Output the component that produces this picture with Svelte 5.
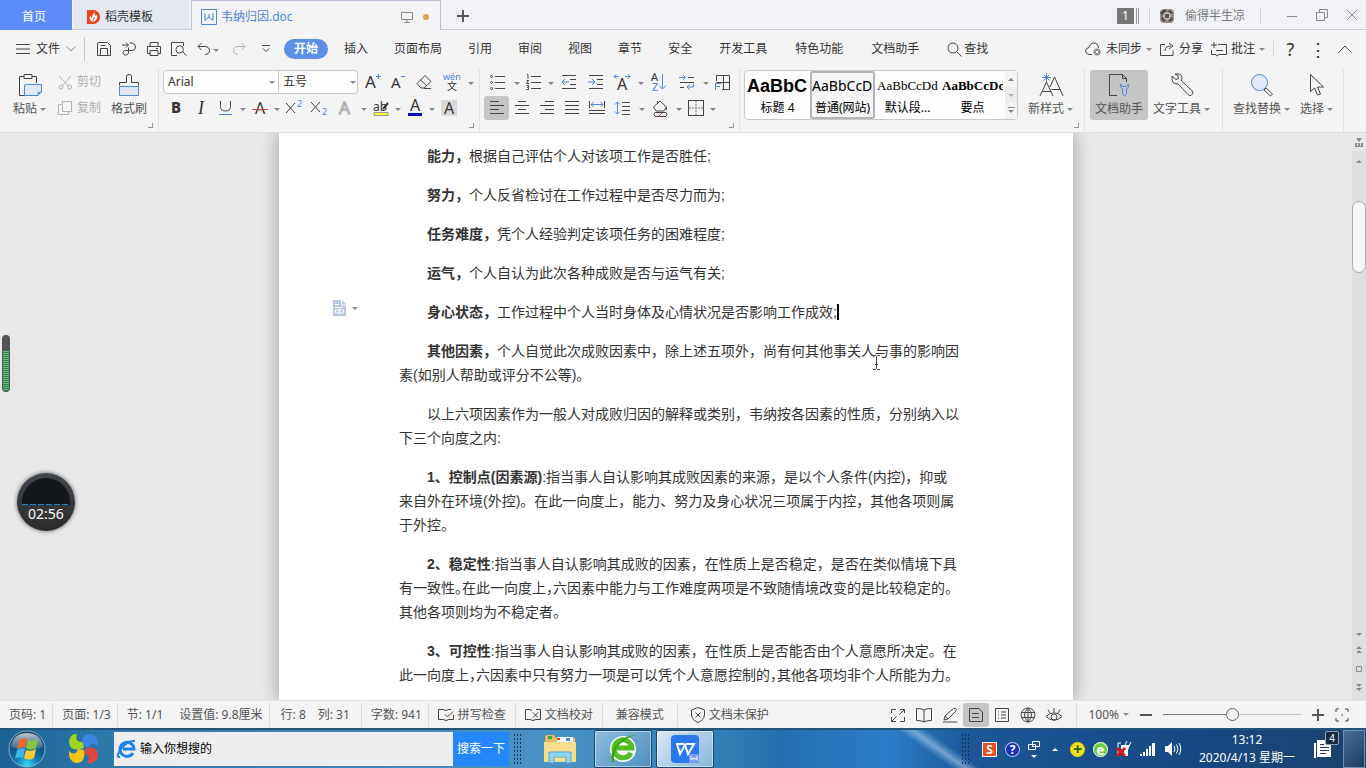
<script>
    // [width, height, ...parts]; a part is [class, path] or [class, text, x, y, size]
    const icons = {
        flame: [14, 14, ['orange', 'M1 0H7C11 0 14 3 14 7S11 14 7 14H1Z'], ['white', 'M7 12C4 11 3 9 4 6L6 8C6 5 7 4 9 2C8 5 9 6 11 5C12 8 10 11 7 12Z'], ['line-orange', 'M7 11C7 9 8 8 9 7']],
        doc: [16, 16, ['blue', 'M.5 .5H15.5V15.5H.5ZM4 4V11.5L8 8L12 11.5V4M8 8V5']],
        monitor: [12, 12, ['grey', 'M.5 1.5H11.5V8.5H.5ZM6 8.5V11.5M3 11.5H9']],
        plus: [12, 12, ['thick', 'M6 0V12M0 6H12']],
        minimize: [12, 12, ['grey', 'M1 7.5H11']],
        restore: [12, 12, ['grey', 'M.5 3.5H8.5V11.5H.5ZM3.5 3.5V.5H11.5V8.5H8.5']],
        close: [12, 12, ['grey', 'M1 1L11 11M11 1L1 11']],
        lines: [14, 14, ['dark', 'M0 2.5H14M0 7H14M0 11.5H14']],
        chevron: [10, 8, ['grey', 'M.5 1.5L5 6L9.5 1.5']],
        save: [14, 14, ['dark', 'M.5 2Q.5 .5 2 .5H10.5L13.5 3.5V13.5H.5ZM3.5 13.5V6.5H10.5V13.5M3.5 3.5H8.5']],
        output: [14, 14, ['dark', 'M0 3H6M4 .5L6.5 3L4 5.5M7.5 1H10Q13.5 1.5 13.5 5T10 8.5H3.5Q1 8.5 1 10.7T3.5 13T6.5 11V5.5']],
        print: [14, 14, ['dark', 'M3 4.5V.5H11V4.5M3 11.5H.5V4.5H13.5V11.5H11M3 8.5H11V13.5H3ZM9 6.5H11']],
        preview: [16, 14, ['dark', 'M6 13.5H.5V.5H12.5V4M12 10L15.5 13.5'], ['dark', 'M5 7.5A3.7 3.7 0 1 0 12.4 7.5A3.7 3.7 0 1 0 5 7.5']],
        undo: [14, 14, ['dark', 'M1 4.5H8Q12.5 5 12.5 8.5T8 12.5M4.5 1L1 4.5L4.5 8']],
        redo: [14, 14, ['light', 'M13 4.5H6Q1.5 5 1.5 8.5T6 12.5M9.5 1L13 4.5L9.5 8']],
        more: [8, 8, ['dark', 'M0 .5H8M1 3.5L4 6.5L7 3.5']],
        search: [15, 15, ['dark', 'M1 6A5 5 0 1 0 11 6A5 5 0 1 0 1 6M9.5 9.5L14.5 14.5']],
        cloud: [17, 15, ['dark', 'M7 12.5H4Q.5 12 .5 9T4 5.5Q5 1 9 1T13.5 6'], ['fill-grey', 'M12 6.5A3.5 3.5 0 1 0 12 13.5A3.5 3.5 0 1 0 12 6.5'], ['line-white', 'M10.5 8.5L13.5 11.5M13.5 8.5L10.5 11.5']],
        share: [15, 15, ['dark', 'M5 2.5H.5V13.5H13V8.5M5 9Q5 4 11 4M9 1L13 4L9 7']],
        comment: [16, 15, ['dark', 'M7 2.5H15.5V12.5H8L5.5 14L5 12.5H.5V8M3 0V6M0 3H6M5 8.5H12']],
        up: [14, 10, ['dark', 'M.5 8.5L7 2L13.5 8.5']],
        paste: [24, 24, ['dark', 'M8 22.5H1.5V3.5H6M14 3.5H18.5V10M6 1.5H14V5.5H6Z'], ['tint', 'M8.5 11.5H23.5V19L20 22.5H6.5V12Z'], ['fill-blue', 'M23.5 18.5L19.5 22.5V19.5Z']],
        cut: [15, 15, ['light', 'M1 1L10.5 11M13 1L4 11M1 12A2 2 0 1 0 5 12A2 2 0 1 0 1 12M9.5 12A2 2 0 1 0 13.5 12A2 2 0 1 0 9.5 12']],
        copy: [15, 15, ['light', 'M4.5 .5H13.5V10.5H4.5ZM4.5 3.5H.5V13.5H10.5V10.5']],
        brush: [24, 24, ['tint', 'M2.5 13.5H21.5V22.5H2.5Z'], ['dark', 'M2.5 12.5V9.5H9.5V3Q9.5 1.5 12 1.5T14.5 3V9.5H21.5V12.5']],
        grow: [18, 18, ['text-dark', 'A', 1, 15, 17], ['blue', 'M12 3.5H17M14.5 1V6']],
        shrink: [16, 18, ['text-dark', 'A', 1, 15, 15], ['blue', 'M11 3.5H15']],
        eraser: [16, 16, ['dark', 'M1 9.5L9 1.5L15 7.5L8 14H5ZM4.5 6L11 12M8 14.5H15']],
        phonetic: [18, 20, ['text-blue', 'wén', 0, 8, 9], ['text-dark', '文', 4, 18, 10]],
        bold: [12, 14, ['text-bold', 'B', 1, 12, 15]],
        italic: [12, 16, ['text-italic', 'I', 3, 14, 18]],
        underline: [14, 16, ['dark', 'M1.5 1V6.5Q1.5 11 6.5 11T11.5 6.5V1'], ['blue', 'M0 14.5H13']],
        strike: [16, 16, ['text-dark', 'A', 3, 14, 16], ['line-red', 'M0 9.5H16']],
        sup: [18, 16, ['dark', 'M1 3L10 13M10 3L1 13'], ['text-blue', '2', 12, 7, 9]],
        sub: [18, 16, ['dark', 'M1 2L10 12M10 2L1 12'], ['text-blue', '2', 12, 15, 9]],
        outline: [14, 16, ['text-outline', 'A', 1, 14, 17]],
        highlight: [18, 18, ['text-dark', 'ab', 1, 12, 12], ['line-dark', 'M11 10L16 4'], ['yellow', 'M2 13.5H16V16.5H2Z']],
        color: [14, 18, ['text-dark', 'A', 2, 12, 16], ['navy', 'M0 14H14V17H0Z']],
        shade: [16, 18, ['fill-shade', 'M0 1H16V17H0Z'], ['text-dark', 'A', 3, 15, 16]],
        bullets: [16, 16, ['dark', 'M5 2.5H15M5 8.5H15M5 14.5H15M.5 2.5A1 1 0 1 0 2.5 2.5A1 1 0 1 0 .5 2.5M.5 8.5A1 1 0 1 0 2.5 8.5A1 1 0 1 0 .5 8.5M.5 14.5A1 1 0 1 0 2.5 14.5A1 1 0 1 0 .5 14.5']],
        numbers: [16, 16, ['dark', 'M5 2.5H15M5 8.5H15M5 14.5H15M1 .5H2V4.5M.5 6.5H2.5L.5 9.5H3M.5 11.5H2.5V15.5H.5M1 13.5H2.5']],
        outdent: [16, 16, ['dark', 'M1 1.5H15M9 5.5H15M9 10.5H15M1 14.5H15'], ['blue', 'M1 8H8M4 5L1 8L4 11']],
        indent: [16, 16, ['dark', 'M1 1.5H15M9 5.5H15M9 10.5H15M1 14.5H15'], ['blue', 'M0 8H7M4 5L7 8L4 11']],
        scale: [18, 18, ['text-dark', 'A', 4, 17, 16], ['blue', 'M1 3.5H6M3.5 1L1 3.5L3.5 6M12 3.5H17M14.5 1L17 3.5L14.5 6']],
        sort: [18, 20, ['text-dark', 'A', 1, 9, 11], ['text-blue', 'Z', 2, 19, 11], ['blue', 'M12.5 2V17M9 13.5L12.5 17L16 13.5']],
        tabs: [16, 16, ['dark', 'M9 3.5H15M1 8.5H15M1 13.5H5'], ['blue', 'M0 3.5H6M4 1L6.5 3.5L4 6M14.5 10V13H8M10.5 10.5L8 13L10.5 15.5']],
        tableframe: [17, 17, ['dark', 'M2.5 7V1.5H15.5V15.5H8M9.5 1.5V15.5M2.5 8.5H15.5'], ['blue', 'M1.5 16V9.5H7M1.5 12.5H6']],
        left: [14, 14, ['dark', 'M0 .5H9M0 4.5H14M0 8.5H9M0 12.5H14']],
        center: [14, 14, ['dark', 'M3 .5H11M0 4.5H14M3 8.5H11M0 12.5H14']],
        right: [14, 14, ['dark', 'M5 .5H14M0 4.5H14M5 8.5H14M0 12.5H14']],
        justify: [14, 14, ['dark', 'M0 .5H14M0 4.5H14M0 8.5H14M0 12.5H14']],
        distribute: [16, 14, ['dark', 'M.5 0V7M15.5 0V7M0 9.5H16M0 12.5H16'], ['blue', 'M2 3.5H14M4.5 1L2 3.5L4.5 6M11.5 1L14 3.5L11.5 6']],
        spacing: [16, 16, ['dark', 'M7 2.5H15M7 6.5H15M7 10.5H15M7 14.5H15'], ['blue', 'M2.5 2V14M0 4.5L2.5 2L5 4.5M0 11.5L2.5 14L5 11.5']],
        fill: [17, 17, ['dark', 'M1.5 7L8 1L14.5 7L12 11H4ZM5.5 4V1M14.5 7V10'], ['line-red', 'M7 16L10 13'], ['dark', 'M3 12.5H14Q16 14.5 14 16.5H3Q1 14.5 3 12.5']],
        border: [16, 16, ['dark', 'M.5 .5H15.5V15.5H.5Z'], ['dash', 'M8 1V15M1 8H15']],
        newstyle: [28, 24, ['dark', 'M3 23L9.5 9L16 23M5 18.5H14M13 14L17.5 4L26 23M14.5 16.5H23'], ['blue', 'M9.5 0V9M5 4.5H14M6.5 1.5L12.5 7.5M12.5 1.5L6.5 7.5']],
        helper: [24, 24, ['dark', 'M10 22.5H2.5V1.5H15.5L19.5 5.5V9M15.5 1.5V5.5H19.5'], ['blue', 'M13.5 11Q12 14 15.5 16V21Q17.5 24 19.5 21V16Q23 14 21.5 11L19.5 13.5H15.5Z']],
        wrench: [24, 24, ['dark', 'M2 3L6 6.5L8.5 5.5L8 2.5L5 1Q11 0 12 4L11.5 8L22.5 18Q24 21 21 22.5Q19 23 18 21.5L8 11Q1 11.5 2 3Z']],
        find: [24, 24, ['tint', 'M1.5 9.5A8 8 0 1 0 17.5 9.5A8 8 0 1 0 1.5 9.5'], ['dark', 'M14 17L16 15L22.5 21L20.5 23Z']],
        pointer: [18, 24, ['dark', 'M2.5 1.5V18.5L6.5 15L9.5 22L12.5 21L9.5 14H15.5Z']],
        tip: [13, 16, ['pale', 'M0 0H9L13 4V16H0Z'], ['line-white', 'M8.5 0V5H13M2 4.5H6M2 7.5H10M2.5 10H10.5V13H2.5ZM6.5 9V14']],
        spell: [16, 14, ['dark', 'M8 2.5Q6 1 .5 1.5V11.5Q6 11 8 12.5Q10 11 15.5 11.5V7M8 2.5Q10 1 13 1.5M7 6.5L9.5 9L15 3.5']],
        proof: [16, 14, ['dark', 'M7 2.5Q5 1 .5 1.5V11.5Q6 11 8 12.5Q10 11 15.5 11.5V1.5H11M8 4.5L13 9.5M13 4.5L8 9.5']],
        shield: [14, 16, ['dark', 'M7 .5L13.5 3V8Q13 13 7 15.5Q1 13 .5 8V3ZM4.5 5.5L9.5 10.5M9.5 5.5L4.5 10.5']],
        full: [16, 16, ['dark', 'M1.5 6V2.5H6M10 2.5H14.5V6M14.5 10V14.5H10M6 14.5H1.5V10M9.5 7.5L14 3M2 14L6.5 9.5']],
        book: [16, 16, ['dark', 'M8 3Q6 1.5 .5 1.5V13.5Q6 13.5 8 15Q10 13.5 15.5 13.5V1.5Q10 1.5 8 3V15']],
        pen: [16, 16, ['dark', 'M2 13L3 9L11.5 1.5Q15 .5 14 4L6 12ZM3 9L6 12M1 15H15.5']],
        page: [16, 16, ['dark', 'M1.5 1.5H11L14.5 5V14.5H1.5ZM4 6.5H11M4 10.5H11']],
        outlineview: [16, 16, ['dark', 'M1.5 1.5H14.5V14.5H1.5ZM4 5H5M7 5H12M4 8H5M7 8H12M4 11H5M7 11H12']],
        globe: [16, 16, ['dark', 'M1 8A7 7 0 1 0 15 8A7 7 0 1 0 1 8M8 1V15M1.5 5.5H14.5M1.5 10.5H14.5M8 1Q1 8 8 15Q15 8 8 1']],
        eye: [18, 16, ['dark', 'M1 9.5Q9 2 17 9.5Q9 17 1 9.5M6 10A3 3 0 1 0 12 10A3 3 0 1 0 6 10M9 5V1M5 6L3 2.5M13 6L15 2.5']],
        minus: [12, 12, ['thick', 'M0 6H12']],
        fit: [14, 14, ['dark', 'M1 4V1H4M10 1H13V4M13 10V13H10M4 13H1V10M6.5 7H7.5M7 6.5V7.5']],
        desk: [12, 10, ['line-white', 'M4.5 .5H11.5V5.5H4.5ZM.5 3.5H7.5V8.5H.5Z']],
        bars: [16, 16, ['white', 'M0 13H2V15H0ZM3 11H5V15H3ZM6 8H8V15H6ZM9 5H11V15H9ZM12 2H15V15H12Z']],
        speaker: [18, 16, ['white', 'M1 5H4L8 1V15L4 11H1Z'], ['line-white', 'M10 5Q12 8 10 11M12.5 3.5Q15.5 8 12.5 12.5M15 2Q18.5 8 15 14']],
        plug: [16, 16, ['white', 'M5 4H14L12 9V15H8V9L5 8Z'], ['line-white', 'M13 5L15 1M9 4L11 0M2 13V2H5'], ['line-close', 'M1 7L9 15M9 7L1 15']],
        note: [22, 20, ['white', 'M4 1H18V18H4ZM1 4H3V19H1Z'], ['line-navy', 'M7 5.5H11M7 8.5H16M7 11.5H16M7 14.5H13']],
        ruler: [10, 10, ['fill-grey', 'M2 0H8L5 4ZM1 5H3V8H4V5H6V8H7V5H9V9H1Z']],
        prev: [8, 8, ['fill-grey', 'M4 0L7 3H1ZM4 4L7 7H1Z']],
        next: [8, 8, ['fill-grey', 'M1 0H7L4 3ZM1 4H7L4 7Z']],
        target: [8, 8, ['grey', 'M1.5 1.5H6.5V6.5H1.5Z']]
    };

    const quick = [['save', '保存'], ['output', '输出为PDF'], ['print', '打印'], ['preview', '打印预览']];
    const tabs = ['开始', '插入', '页面布局', '引用', '审阅', '视图', '章节', '安全'];
    const extraTabs = ['开发工具', '特色功能', '文档助手'];

    // name, label, caret, wide
    const fontTop = [['grow', '增大字号'], ['shrink', '减小字号'], ['eraser', '清除格式', 0, 1], ['phonetic', '拼音指南', 1, 1]];
    const fontBottom = [
        ['bold', '加粗'], ['italic', '倾斜'], ['underline', '下划线', 1], ['strike', '删除线', 1], ['sup', '上标'],
        ['sub', '下标'], ['outline', '文字效果', 1, 1], ['highlight', '突出显示', 1], ['color', '字体颜色', 1], ['shade', '字符底纹']
    ];
    const paraTop = [
        ['bullets', '项目符号', 1, 1], ['numbers', '编号', 1], ['outdent', '减少缩进', 0, 1], ['indent', '增加缩进'],
        ['scale', '中文版式', 1, 1], ['sort', '排序', 0, 1], ['tabs', '制表位', 1, 1], ['tableframe', '插入框']
    ];
    const paraBottom = [
        ['left', '左对齐'], ['center', '居中'], ['right', '右对齐'], ['justify', '两端对齐'], ['distribute', '分散对齐'],
        ['spacing', '行距', 1, 1], ['fill', '底纹颜色', 1, 1], ['border', '边框', 1]
    ];
    const styles = [
        { name: '标题 4', sample: 'AaBbC', kind: 'heading' },
        { name: '普通(网站)', sample: 'AaBbCcD', kind: 'web' },
        { name: '默认段...', sample: 'AaBbCcDd', kind: 'serif' },
        { name: '要点', sample: 'AaBbCcDd', kind: 'strong' }
    ];

    // tight: index of the line whose punctuation is set half-width
    const paragraphs = [
        { term: '能力，', lines: ['根据自己评估个人对该项工作是否胜任;'] },
        { term: '努力，', lines: ['个人反省检讨在工作过程中是否尽力而为;'] },
        { term: '任务难度，', lines: ['凭个人经验判定该项任务的困难程度;'] },
        { term: '运气，', lines: ['个人自认为此次各种成败是否与运气有关;'] },
        { term: '身心状态，', lines: ['工作过程中个人当时身体及心情状况是否影响工作成效;'], active: true },
        { term: '其他因素，', lines: ['个人自觉此次成败因素中，除上述五项外，尚有何其他事关人与事的影响因', '素(如别人帮助或评分不公等)。'] },
        { term: '', lines: ['以上六项因素作为一般人对成败归因的解释或类别，韦纳按各因素的性质，分别纳入以', '下三个向度之内:'] },
        { term: '1、控制点(因素源)', lines: [':指当事人自认影响其成败因素的来源，是以个人条件(内控)，抑或', '来自外在环境(外控)。在此一向度上，能力、努力及身心状况三项属于内控，其他各项则属', '于外控。'] },
        { term: '2、稳定性', lines: [':指当事人自认影响其成败的因素，在性质上是否稳定，是否在类似情境下具', '有一致性。在此一向度上，六因素中能力与工作难度两项是不致随情境改变的是比较稳定的。', '其他各项则均为不稳定者。'], tight: 1 },
        { term: '3、可控性', lines: [':指当事人自认影响其成败的因素，在性质上是否能否由个人意愿所决定。在', '此一向度上，六因素中只有努力一项是可以凭个人意愿控制的，其他各项均非个人所能为力。'], tight: 1 }
    ];

    const views = [['full', '全屏显示'], ['book', '阅读版式'], ['pen', '写作模式'], ['page', '页面视图'], ['outlineview', '大纲'], ['globe', 'Web版式'], ['eye', '护眼模式']];

    let font = $state('Arial');
    let size = $state('五号');
    let zoom = $state(50);
    let tab = $state('开始');
    let align = $state('left');
    let view = $state('page');
    let query = $state('');
</script>

{#snippet icon(name)}
    {@const [w, h, ...parts] = icons[name]}
    <svg width={w} height={h} viewBox="0 0 {w} {h}" fill="none" aria-hidden="true">
        {#each parts as p}
            {#if p.length > 2}
                <text class={p[0]} x={p[2]} y={p[3]} font-size={p[4]}>{p[1]}</text>
            {:else}
                <path class={p[0]} d={p[1]} />
            {/if}
        {/each}
    </svg>
{/snippet}

{#snippet tools(list)}
    {#each list as [name, label, caret, wide]}
        <button class="tool" class:wide class:on={name === align} aria-label={label}
            onclick={() => { if (['left', 'center', 'right', 'justify'].includes(name)) align = name; }}>
            <span class="slot">{@render icon(name)}</span>
            {#if caret}<span class="caret"></span>{/if}
        </button>
    {/each}
{/snippet}

{#snippet big(name, label, caret, on)}
    <button class="big" class:pressed={on}>
        {@render icon(name)}
        <span class="big-label">{label}{#if caret}<i class="caret"></i>{/if}</span>
    </button>
{/snippet}

<div class="app">
    <header class="titlebar">
        <button class="home">首页</button>
        <button class="doctab">{@render icon('flame')}<span>稻壳模板</span></button>
        <button class="doctab current">
            {@render icon('doc')}<span class="filename">韦纳归因.doc</span>
            {@render icon('monitor')}<span class="unsaved"></span>
        </button>
        <button class="newtab" aria-label="新建">{@render icon('plus')}</button>
        <div class="account">
            <span class="count">1</span><span class="stack"></span>
            <span class="avatar">
                <svg width="16" height="16" viewBox="0 0 16 16" aria-hidden="true">
                    <rect x="1" y="1" width="14" height="14" rx="4" fill="#a08c86" />
                    <path d="M3 3L6 1L8 4L11 2L14 5L11 7L14 11L11 14L8 11L5 14L2 11L4 8L1 5Z" fill="#4a4a4c" />
                    <circle cx="8" cy="8" r="4" fill="#bdb9b6" />
                    <path d="M6 6H10V10H6Z" fill="#5d5654" />
                </svg>
            </span>
            <span class="user">偷得半生凉</span>
        </div>
        <div class="window">
            <button aria-label="最小化">{@render icon('minimize')}</button>
            <button aria-label="还原">{@render icon('restore')}</button>
            <button aria-label="关闭">{@render icon('close')}</button>
        </div>
    </header>

    <nav class="menubar">
        <button class="file">{@render icon('lines')}<span>文件</span>{@render icon('chevron')}</button>
        <div class="quick">
            {#each quick as [name, label]}
                <button class="tool" aria-label={label}>{@render icon(name)}</button>
            {/each}
            <button class="tool split" aria-label="撤销">{@render icon('undo')}<span class="caret"></span></button>
            <button class="tool wide" aria-label="恢复">{@render icon('redo')}</button>
            <button class="tool" aria-label="更多">{@render icon('more')}</button>
        </div>
        <div class="tabs">
            {#each tabs as t}
                <button class:active={t === tab} onclick={() => (tab = t)}>{t}</button>
            {/each}
        </div>
        <div class="tabs extra">
            {#each extraTabs as t}
                <button class:active={t === tab} onclick={() => (tab = t)}>{t}</button>
            {/each}
            <button class="lookup">{@render icon('search')}查找</button>
        </div>
        <div class="share">
            <button>{@render icon('cloud')}未同步<span class="caret"></span></button>
            <button>{@render icon('share')}分享</button>
            <button>{@render icon('comment')}批注<span class="caret"></span></button>
        </div>
        <div class="help">
            <button class="question">?</button>
            <button class="dots">⋮</button>
            <button aria-label="折叠功能区">{@render icon('up')}</button>
        </div>
    </nav>

    <section class="ribbon">
        <div class="group clipboard">
            {@render big('paste', '粘贴', true)}
            <div class="column">
                <button class="small">{@render icon('cut')}剪切</button>
                <button class="small">{@render icon('copy')}复制</button>
            </div>
            {@render big('brush', '格式刷')}
            <span class="corner"></span>
        </div>
        <div class="group font">
            <div class="column">
                <div class="row">
                    <div class="combos">
                        <label class="combo name">
                            <select bind:value={font} aria-label="字体"><option>Arial</option></select>
                            <span class="caret"></span>
                        </label>
                        <label class="combo">
                            <select bind:value={size} aria-label="字号"><option>五号</option></select>
                            <span class="caret"></span>
                        </label>
                    </div>
                    {@render tools(fontTop)}
                </div>
                <div class="row">{@render tools(fontBottom)}</div>
            </div>
            <span class="corner"></span>
        </div>
        <div class="group para">
            <div class="column">
                <div class="row">{@render tools(paraTop)}</div>
                <div class="row">{@render tools(paraBottom)}</div>
            </div>
            <span class="corner"></span>
        </div>
        <div class="group gallery-group">
            <div class="gallery">
                {#each styles as s, i}
                    <button class="style" class:selected={i === 1}>
                        <span class="sample {s.kind}">{s.sample}</span>
                        <span class="style-name">{s.name}</span>
                    </button>
                {/each}
                <div class="scroller">
                    <button aria-label="上一行"><span class="caret flip"></span></button>
                    <button aria-label="下一行" disabled><span class="caret"></span></button>
                    <button aria-label="更多样式"><span class="caret bar"></span></button>
                </div>
            </div>
            {@render big('newstyle', '新样式', true)}
            <span class="corner"></span>
        </div>
        <div class="group helpers">
            {@render big('helper', '文档助手', false, true)}
            {@render big('wrench', '文字工具', true)}
        </div>
        <div class="group edit">
            {@render big('find', '查找替换', true)}
            {@render big('pointer', '选择', true)}
        </div>
    </section>

    <main class="workspace">
        <div class="desk">
            <article class="page">
                {#each paragraphs as p}
                    <p>
                        {#if p.active}<span class="tip">{@render icon('tip')}<i class="caret"></i></span>{/if}
                        {#each p.lines as line, i}
                            <span class="line" class:tight={i === p.tight}>{#if i === 0 && p.term}<b>{p.term}</b>{/if}{line}{#if p.active}<i class="cursor"></i>{/if}</span>
                        {/each}
                    </p>
                {/each}
            </article>
        </div>
        <div class="scrollbar">
            <span class="ruler">{@render icon('ruler')}</span>
            <div class="track">
                <span class="caret flip"></span>
                <span class="thumb"></span>
                <span class="caret bottom"></span>
            </div>
            <div class="jumps">
                {@render icon('prev')}
                {@render icon('target')}
                {@render icon('next')}
            </div>
        </div>
        <div class="meter"><span></span></div>
        <div class="recorder">
            <div class="dial"></div>
            <span class="time">02:56</span>
        </div>
        <svg class="ibeam" width="9" height="15" viewBox="0 0 9 15" fill="none" aria-hidden="true">
            <path class="dark" d="M1 .5H3.5L4.5 1.5L5.5 .5H8M4.5 1.5V13.5M1 14.5H3.5L4.5 13.5L5.5 14.5H8M3 9.5H6" />
        </svg>
    </main>

    <footer class="status">
        <span class="cell">页码: 1</span>
        <span class="cell">页面: 1/3</span>
        <span class="cell pair"><span>节: 1/1</span><span>设置值: 9.8厘米</span></span>
        <span class="cell pair tight-pair"><span>行: 8</span><span>列: 31</span></span>
        <span class="cell">字数: 941</span>
        <button class="cell">{@render icon('spell')}拼写检查</button>
        <button class="cell">{@render icon('proof')}文档校对</button>
        <button class="cell mode">兼容模式</button>
        <button class="cell mode last">{@render icon('shield')}文档未保护</button>
        <div class="views">
            {#each views as [name, label]}
                <button class:on={name === view} aria-label={label} onclick={() => (view = name)}>{@render icon(name)}</button>
            {/each}
        </div>
        <div class="zoom">
            <button class="percent">100%<span class="caret"></span></button>
            <button aria-label="缩小">{@render icon('minus')}</button>
            <input type="range" min="0" max="100" bind:value={zoom} aria-label="显示比例" />
            <button aria-label="放大">{@render icon('plus')}</button>
            <button aria-label="最佳显示比例">{@render icon('fit')}</button>
        </div>
    </footer>

    <div class="taskbar">
        <button class="start" aria-label="开始菜单">
            <svg width="38" height="38" viewBox="0 0 38 38" aria-hidden="true">
                <defs>
                    <radialGradient id="orb" cx="50%" cy="95%" r="85%">
                        <stop offset="0" stop-color="#35d8ff" />
                        <stop offset=".4" stop-color="#1273ab" />
                        <stop offset="1" stop-color="#173a5c" />
                    </radialGradient>
                    <linearGradient id="shine" x1="0" y1="0" x2="0" y2="1">
                        <stop offset="0" stop-color="#fff" stop-opacity=".7" />
                        <stop offset="1" stop-color="#fff" stop-opacity=".1" />
                    </linearGradient>
                </defs>
                <circle cx="19" cy="19" r="18" fill="url(#orb)" stroke="#7fb4d0" />
                <path d="M3 17Q5 3 19 3T35 17Q19 22 3 17Z" fill="url(#shine)" />
                <path d="M11 10Q15 7 19 9L17 18Q13 16 9 19Z" fill="#f0672c" />
                <path d="M20 10Q25 12 30 9L28 18Q23 21 18 18Z" fill="#8cc63e" />
                <path d="M9 20Q13 17 17 19L15 28Q11 26 7 29Z" fill="#40b2e8" />
                <path d="M18 20Q23 22 28 19L26 28Q21 31 16 28Z" fill="#fccb2f" />
            </svg>
        </button>
        <button class="balls" aria-label="浏览器">
            <svg width="32" height="32" viewBox="0 0 32 32" aria-hidden="true">
                <path d="M16 15Q2 20 1 9Q2 0 9 1Q6 9 15 9Z" fill="#9fd61c" />
                <path d="M15 12Q12 1 23 1Q31 3 30 13Q24 7 20 15Z" fill="#3a86e0" />
                <path d="M16 17Q18 30 8 30Q0 28 1 18Q7 24 10 16Z" fill="#f8c417" />
                <path d="M17 16Q29 11 30 23Q28 31 19 30Q24 23 17 21Z" fill="#e0473c" />
            </svg>
        </button>
        <form class="search" onsubmit={(e) => e.preventDefault()}>
            <svg width="20" height="20" viewBox="0 0 20 20" fill="none" aria-hidden="true">
                <path d="M16 14A7 7 0 1 1 17 10H6" stroke="#1c84e8" stroke-width="3" />
                <path d="M3 18Q-2 19 4 10Q11 1 18 2" stroke="#1c84e8" stroke-width="2" />
            </svg>
            <input type="text" placeholder="输入你想搜的" aria-label="搜索" bind:value={query} />
            <button>搜索一下</button>
        </form>
        <span class="grip"></span>
        <button class="task plain" aria-label="资源管理器">
            <svg width="34" height="30" viewBox="0 0 34 30" aria-hidden="true">
                <path d="M2 3Q2 1 4 1H11L13 4H32V27H2Z" fill="#e2bd61" />
                <path d="M5 2H9V5H5Z" fill="#3fa648" />
                <path d="M14 3H30V8H14Z" fill="#f5f7f8" />
                <path d="M23 4H27V7H23Z" fill="#4a8fc8" />
                <path d="M14 4H17V6H14Z" fill="#cc4338" />
                <path d="M1 8H33V28H1Z" fill="#f7de8f" />
                <path d="M6 29V18H28V29H23V23H11V29Z" fill="#8fd3ee" stroke="#5ba7cd" />
            </svg>
        </button>
        <button class="task" aria-label="360浏览器">
            <svg width="30" height="32" viewBox="0 0 30 32" fill="none" aria-hidden="true">
                <circle cx="15" cy="16" r="13" fill="#fff" />
                <path d="M23 20A9 9 0 1 1 24 15H8" stroke="#55bd22" stroke-width="5" />
                <path d="M4 29Q1 20 10 10Q18 2 28 2Q20 4 12 11Q5 18 6 29Z" fill="#3da31a" />
            </svg>
        </button>
        <button class="task current" aria-label="WPS文字">
            <svg width="28" height="28" viewBox="0 0 28 28" fill="none" aria-hidden="true">
                <rect width="28" height="28" rx="4" fill="#2a78ee" />
                <path d="M5 9H13M6 9L9 19L14 10L17 19L23 9H15" stroke="#fff" stroke-width="2" />
                <rect x="18" y="19" width="10" height="9" rx="1" fill="#7b9cf4" />
                <path d="M20 21V25L23 23L26 25V21" stroke="#fff" />
            </svg>
        </button>
        <div class="tray">
            <span class="grip"></span>
            <span class="sogou">S</span>
            <span class="ask">?</span>
            <span class="lang">{@render icon('desk')}<i class="caret"></i></span>
            <i class="caret flip"></i>
            <span class="guard">+</span>
            <span class="leaf">e</span>
            {@render icon('plug')}
            {@render icon('bars')}
            {@render icon('speaker')}
        </div>
        <div class="clock"><span>13:12</span><span>2020/4/13 星期一</span></div>
        <div class="notes">{@render icon('note')}<span class="badge">4</span></div>
        <button class="showdesk" aria-label="显示桌面"></button>
    </div>
</div>

<style>
    :global(body) {
        margin: 0;
    }

    .app {
        height: 100vh;
        display: flex;
        flex-direction: column;
        overflow: hidden;
        background: #f4f4f4;
        color: #333;
        font: 12px/16px "Noto Sans", "Noto Sans CJK SC", sans-serif;
    }

    button {
        display: flex;
        align-items: center;
        justify-content: center;
        padding: 0;
        border: 0;
        background: none;
        color: inherit;
        font: inherit;
        white-space: nowrap;
    }

    svg {
        flex: none;
        display: block;
        overflow: visible;
    }

    .caret {
        flex: none;
        width: 0;
        height: 0;
        border: 3px solid transparent;
        border-top-color: #888;
        border-bottom: 0;
    }

    .caret.flip {
        border-top: 0;
        border-bottom: 3px solid #888;
    }

    /* icon parts */
    .dark { stroke: #444; }
    .line-dark { stroke: #333; stroke-width: 2; }
    .thick { stroke: #555; stroke-width: 2; }
    .grey { stroke: #888; }
    .light { stroke: #b4b4b4; }
    .blue { stroke: #4e86d8; }
    .dash { stroke: #777; stroke-dasharray: 2 1; }
    .line-white { stroke: #fff; }
    .line-red { stroke: #c8524c; }
    .line-orange { stroke: #e8441c; }
    .line-navy { stroke: #1a3d66; }
    .line-close { stroke: #d81818; stroke-width: 3; }
    .tint { stroke: #4e86d8; fill: #e1e9f6; }
    .orange { fill: #e8441c; }
    .white { fill: #fff; }
    .pale { fill: #b9c6e4; }
    .yellow { fill: #ff3; stroke: #999; }
    .navy { fill: #0808d0; }
    .fill-grey { fill: #8a8a8a; }
    .fill-blue { fill: #4e86d8; }
    .fill-shade { fill: #d9d9d9; }
    .text-dark { fill: #333; }
    .text-blue { fill: #4e86d8; }
    .text-bold { fill: #333; font-weight: 800; }
    .text-italic { fill: #333; font-family: "Liberation Serif", serif; font-style: italic; }
    .text-outline { fill: #f4f4f4; stroke: #aaa; }

    /* title bar */
    .titlebar {
        display: flex;
        height: 30px;
        box-sizing: border-box;
        flex: none;
        background: #f1f2f6;
        box-shadow: inset 0 -1px #c6ccdb;
    }

    .home {
        width: 72px;
        padding-right: 4px;
        padding-top: 3px;
        background: #5c8cf6;
        color: #fff;
    }

    .doctab {
        width: 115px;
        margin: 0 2px 1px;
        padding: 4px 12px 0;
        gap: 5px;
        justify-content: flex-start;
        background: #e3e7f0;
        color: #333;
    }

    .doctab.current {
        width: 250px;
        margin: 0;
        gap: 4px;
        padding: 2px 11px 0 9px;
        border: 1px solid #bcc2d8;
        border-bottom: 0;
        background: #f4f4f4;
        color: #4e86d8;
    }

    .filename {
        flex: 1;
        text-align: left;
    }

    .unsaved {
        width: 6px;
        height: 6px;
        margin-left: 6px;
        border-radius: 50%;
        background: #e0a060;
    }

    .newtab {
        width: 44px;
        padding-top: 2px;
    }

    .account {
        display: flex;
        align-items: center;
        margin-left: auto;
        padding-top: 1px;
        color: #777;
    }

    .count {
        width: 17px;
        background: #757678;
        color: #fff;
        text-align: center;
        border-radius: 1px;
    }

    .stack {
        width: 1px;
        height: 16px;
        margin-left: 2px;
        border: solid #999;
        border-width: 0 1px;
    }

    .avatar {
        margin-left: 10px;
        padding-left: 9px;
        border-left: 1px solid #d0d3da;
    }

    .user {
        padding: 0 15px 0 10px;
        border-right: 1px solid #d0d3da;
    }

    .window {
        display: flex;
        gap: 18px;
        padding: 0 8px 0 25px;
    }

    /* menu bar */
    .menubar {
        display: flex;
        align-items: center;
        box-sizing: border-box;
        height: 37px;
        padding-top: 1px;
        flex: none;
    }

    .file {
        gap: 6px;
        padding: 0 8px 0 16px;
        height: 24px;
        border-right: 1px solid #c8c8c8;
    }

    .quick {
        display: flex;
        padding: 0 3px 0 6px;
    }

    .tabs {
        display: flex;
    }

    .tabs button {
        padding: 0 13px;
        height: 20px;
    }

    .tabs .active {
        margin-left: 3px;
        margin-right: 3px;
        padding: 0 10px;
        border-radius: 10px;
        background: #5c8fe8;
        color: #fff;
        font-weight: bold;
    }

    .extra button {
        padding: 0 14px;
    }

    .extra .lookup {
        gap: 2px;
    }

    .share {
        display: flex;
        gap: 8px;
        margin-left: auto;
        padding-right: 8px;
        border-right: 1px solid #d8d8d8;
    }

    .share button {
        gap: 4px;
    }

    .help {
        display: flex;
        align-items: center;
        padding: 0 8px 0 3px;
    }

    .help button {
        width: 27px;
    }

    .question,
    .dots {
        font-size: 18px;
    }

    /* ribbon */
    .ribbon {
        display: flex;
        flex: none;
        padding: 2px 0 0;
        border-bottom: 1px solid #dedede;
    }

    .group {
        position: relative;
        display: flex;
        align-items: flex-start;
        padding-bottom: 11px;
        border-right: 1px solid #e2e2e2;
    }

    .clipboard { padding-left: 8px; padding-right: 6px; }
    .font { padding-left: 4px; padding-right: 4px; }
    .para { padding-left: 4px; padding-right: 4px; }
    .gallery-group { padding-left: 4px; padding-right: 6px; }
    .helpers { padding-left: 5px; padding-right: 7px; }
    .edit { padding-left: 5px; padding-right: 5px; }

    .corner {
        position: absolute;
        right: 5px;
        bottom: 4px;
        width: 4px;
        height: 4px;
        border: solid #999;
        border-width: 0 1px 1px 0;
    }

    .column {
        display: flex;
        flex-direction: column;
    }

    .row {
        display: flex;
        height: 26px;
        align-items: center;
    }

    .tool {
        min-width: 25px;
        height: 24px;
    }

    .tool.wide {
        min-width: 28px;
    }

    .tool.split {
        min-width: 34px;
    }

    .tool .caret {
        margin: 2px 1px 0 2px;
    }

    .slot {
        display: flex;
        justify-content: center;
        width: 25px;
    }

    .wide .slot {
        width: 28px;
    }

    .tool.on {
        border-radius: 3px;
        background: #c4c4c4;
    }

    .big {
        flex-direction: column;
        gap: 4px;
        height: 50px;
        margin-top: 1px;
        padding: 0 5px;
        border-radius: 3px;
        color: #555;
    }

    .big-label {
        display: flex;
        align-items: center;
    }

    .big-label .caret {
        margin-left: 3px;
    }

    .pressed {
        background: #c4c4c4;
    }

    .small {
        height: 26px;
        gap: 4px;
        padding: 0 5px 0 7px;
        color: #b0b0b0;
    }

    .combos {
        display: grid;
        grid-template-columns: 115px 80px;
        box-sizing: border-box;
        width: 195px;
        margin-right: 2px;
        border: 1px solid #c9c9c9;
        border-radius: 4px;
        background: #fdfdfd;
    }

    .combo {
        display: grid;
        align-items: center;
    }

    .combo > * {
        grid-area: 1 / 1;
    }

    .combo.name {
        border-right: 1px solid #c9c9c9;
    }

    .combo .caret {
        justify-self: end;
        margin-right: 3px;
        pointer-events: none;
    }

    select {
        appearance: none;
        height: 22px;
        min-width: 0;
        padding: 0 4px;
        border: 0;
        background: none;
        color: #333;
        font: inherit;
    }

    .gallery {
        display: flex;
        box-sizing: border-box;
        height: 50px;
        margin: 1px 5px 0 0;
        border: 1px solid #c9c9c9;
        border-radius: 4px;
        background: #fdfdfd;
        color: #000;
    }

    .style {
        flex-direction: column;
        box-sizing: border-box;
        width: 65px;
        border: 2px solid transparent;
        overflow: hidden;
    }

    .selected {
        border-color: #b4b4b4;
        border-radius: 3px;
        background: #f4f4f4;
    }

    .sample {
        width: 61px;
        height: 26px;
        line-height: 26px;
        overflow: hidden;
        text-align: left;
    }

    .heading { font-family: "Liberation Sans", sans-serif; font-size: 18px; font-weight: bold; }
    .web { font-size: 14px; }
    .serif { font-family: "Liberation Serif", serif; font-size: 13px; }
    .strong { font-family: "Liberation Serif", serif; font-size: 13px; font-weight: bold; }

    .style-name {
        line-height: 18px;
    }

    .scroller {
        display: grid;
        width: 12px;
        background: #f4f4f4;
    }

    .scroller button:disabled {
        background: #e8e8e8;
        opacity: .6;
    }

    .caret.bar {
        position: relative;
    }

    .caret.bar::before {
        content: "";
        position: absolute;
        left: -3px;
        top: -6px;
        width: 7px;
        height: 1px;
        background: #888;
    }

    /* document */
    .workspace {
        position: relative;
        flex: 1;
        min-height: 0;
        display: flex;
        background: #e8e8e8;
        overflow: hidden;
    }

    .desk {
        flex: 1;
    }

    .page {
        box-sizing: border-box;
        width: 794px;
        height: 100%;
        margin: 0 auto;
        padding: 11px 120px 0;
        background: #fff;
        box-shadow: 0 0 16px 1px rgba(0, 0, 0, .3);
        font: 14px/24px "Liberation Sans", "Noto Sans CJK SC", sans-serif;
    }

    p {
        position: relative;
        margin: 0 0 15px;
        text-indent: 28px;
    }

    .line {
        display: block;
        white-space: nowrap;
    }

    .line + .line {
        text-indent: 0;
    }

    .tight {
        font-feature-settings: "halt";
    }

    .cursor {
        display: inline-block;
        width: 2px;
        height: 16px;
        background: #000;
        vertical-align: -3px;
    }

    .tip {
        position: absolute;
        left: -66px;
        top: 0;
        display: flex;
        align-items: center;
        gap: 6px;
        height: 16px;
        text-indent: 0;
    }

    .ibeam {
        position: absolute;
        left: 872px;
        top: 222px;
    }

    .scrollbar {
        display: flex;
        flex-direction: column;
        width: 14px;
    }

    .ruler {
        display: flex;
        justify-content: center;
        padding: 5px 0 3px;
    }

    .track {
        display: flex;
        flex: 1;
        flex-direction: column;
        align-items: center;
        padding: 9px 0 8px;
        background: #dedede;
    }

    .thumb {
        box-sizing: border-box;
        width: 14px;
        height: 72px;
        margin-top: 38px;
        border: 1px solid #aaa;
        border-radius: 7px;
        background: #f7f7f7;
    }

    .bottom {
        margin-top: auto;
    }

    .jumps {
        display: flex;
        flex-direction: column;
        align-items: center;
        gap: 11px;
        padding: 2px 0 8px;
        background: #dedede;
    }

    .meter {
        position: absolute;
        left: 2px;
        top: 202px;
        box-sizing: border-box;
        width: 8px;
        height: 57px;
        padding: 16px 1px 1px;
        border-radius: 4px;
        background: #555;
    }

    .meter span {
        display: block;
        height: 40px;
        border-radius: 0 0 3px 3px;
        background: repeating-linear-gradient(#4fc777 0 1px, #3a7a50 1px 2px);
    }

    .recorder {
        position: absolute;
        left: 17px;
        top: 340px;
        display: flex;
        flex-direction: column;
        align-items: center;
        box-sizing: border-box;
        width: 58px;
        height: 58px;
        padding-top: 5px;
        border-radius: 50%;
        background: linear-gradient(#43474c, #2b2b2b);
        box-shadow: 0 0 4px rgba(0, 0, 0, .6);
    }

    .dial {
        width: 48px;
        height: 27px;
        border-radius: 24px 24px 0 0;
        background: repeating-linear-gradient(90deg, #2384c0 0 6px, transparent 6px 8px) bottom / 100% 1px no-repeat #14171b;
    }

    .time {
        color: #fff;
        font-size: 14px;
        line-height: 18px;
    }

    /* status bar */
    .status {
        display: flex;
        align-items: center;
        flex: none;
        box-sizing: border-box;
        height: 28px;
        border-top: 1px solid #e0e0e0;
        color: #555;
    }

    .cell {
        gap: 4px;
        height: 24px;
        line-height: 24px;
        padding: 0 6px 0 9px;
        border-right: 1px solid #dcdcdc;
        white-space: nowrap;
    }

    button.cell {
        padding: 0 9px;
    }

    .pair {
        display: flex;
        gap: 16px;
    }

    .pair.tight-pair {
        gap: 12px;
        padding: 0 11px;
    }

    .status .mode {
        padding: 0 13px;
    }

    .status .last {
        border: 0;
    }

    .views {
        display: flex;
        margin-left: auto;
        padding-right: 9px;
        border-right: 1px solid #dcdcdc;
    }

    .views button {
        width: 26px;
        height: 24px;
    }

    .views .on {
        border-radius: 3px;
        background: #c4c4c4;
    }

    .zoom {
        display: flex;
        align-items: center;
        gap: 11px;
        padding: 0 17px 0 11px;
    }

    .percent {
        gap: 4px;
    }

    input[type="range"] {
        appearance: none;
        width: 138px;
        height: 14px;
        margin: 0;
        background: linear-gradient(90deg, #777 50%, #c4c4c4 50%) center / 100% 1px no-repeat;
    }

    input[type="range"]::-webkit-slider-thumb {
        appearance: none;
        width: 13px;
        height: 13px;
        border: 1px solid #666;
        border-radius: 50%;
        background: #f4f4f4;
    }

    /* taskbar */
    .taskbar {
        display: flex;
        align-items: center;
        flex: none;
        box-sizing: border-box;
        height: 40px;
        border-top: 2px solid #23547a;
        background: linear-gradient(35deg, transparent 67%, rgba(200, 225, 245, .5) 68%, transparent 69%),
            linear-gradient(90deg, #1c6294, #2c79aa 8%, #4b93c4 40%, #3481b5 52%, #236eb0 57%, #2a7cc8 65%, #1d5797 71%, #174883 88%, #1c426b);
        color: #fff;
    }

    .start {
        margin-left: 8px;
    }

    .balls {
        margin: 0 14px 0 22px;
    }

    .search {
        display: flex;
        align-items: center;
        width: 395px;
        height: 34px;
        box-sizing: border-box;
        padding-left: 3px;
        background: #eee;
    }

    .search input {
        flex: 1;
        min-width: 0;
        padding: 0 3px;
        border: 0;
        background: none;
        color: #000;
        font: inherit;
    }

    .search input::placeholder {
        color: #000;
    }

    .search button {
        width: 56px;
        height: 34px;
        background: #2488fb;
    }

    .grip {
        width: 9px;
        height: 32px;
        margin: 0 4px;
        background: radial-gradient(circle, #10365a 1px, transparent 1px) 0 0 / 3px 4px;
    }

    .task {
        box-sizing: border-box;
        width: 58px;
        height: 38px;
        margin-right: 4px;
        border: 1px solid #16486f;
        border-radius: 2px;
        background: linear-gradient(135deg, #8fbcdc, #4c8fc0);
        box-shadow: inset 0 0 0 1px rgba(255, 255, 255, .5);
    }

    .task.plain {
        width: 68px;
        margin-right: 0;
        border-color: transparent;
        background: none;
        box-shadow: none;
    }

    .task.current {
        background: linear-gradient(135deg, #d8e9f5, #88b6dc);
    }

    .tray {
        display: flex;
        align-items: center;
        gap: 8px;
        margin-left: auto;
    }

    .tray .caret {
        border-top-color: #fff;
    }

    .tray .caret.flip {
        border-bottom-color: #fff;
        margin: 0 4px;
    }

    .sogou, .ask, .guard, .leaf {
        width: 15px;
        height: 15px;
        line-height: 15px;
        border-radius: 50%;
        text-align: center;
        font-weight: bold;
    }

    .sogou { border-radius: 1px; background: #e8501c; box-shadow: inset 0 0 0 1px #fff; }
    .ask { background: #1830b8; box-shadow: inset 0 0 0 1px #b8c8e8; }
    .guard { background: radial-gradient(#f8e020 40%, #d8c800); color: #186818; font-size: 16px; }
    .leaf { background: #6cc844; box-shadow: inset 0 0 0 1px #e0f4d8; font-size: 14px; }

    .lang {
        display: flex;
        flex-direction: column;
        align-items: center;
        gap: 4px;
    }

    .clock {
        display: flex;
        flex-direction: column;
        align-items: center;
        width: 102px;
        margin-left: 14px;
        line-height: 18px;
        white-space: nowrap;
    }

    .notes {
        position: relative;
        width: 30px;
        margin: 0 0 0 15px;
    }

    .badge {
        position: absolute;
        left: 12px;
        top: -8px;
        width: 12px;
        height: 12px;
        border: 1px solid #8fa4ba;
        border-radius: 2px;
        background: #152c44;
        font-size: 10px;
        line-height: 12px;
        text-align: center;
    }

    .showdesk {
        box-sizing: border-box;
        width: 22px;
        height: 38px;
        margin-right: 1px;
        border: 1px solid #6f8fb0;
        background: linear-gradient(135deg, #4a6f98, #1b3c62);
    }
</style>
